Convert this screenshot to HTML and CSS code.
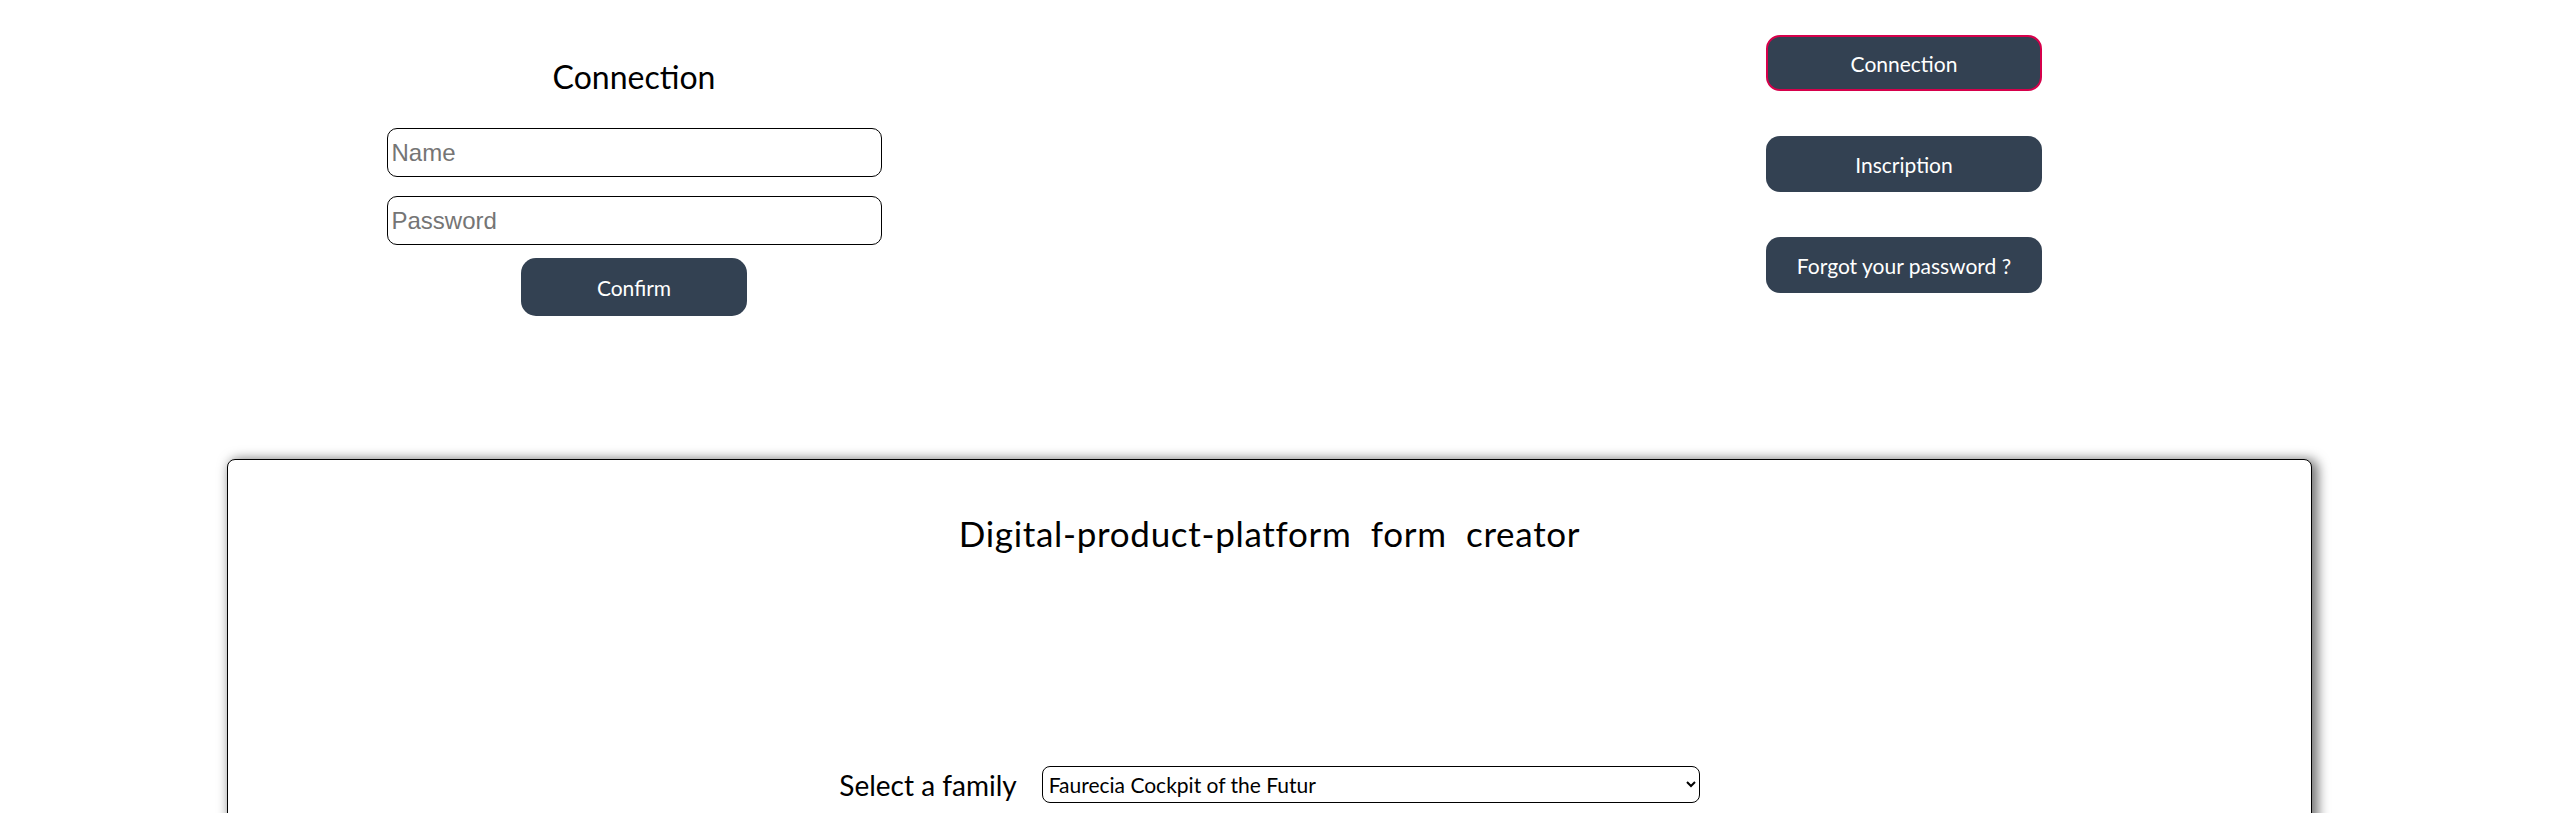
FILE: index.html
```html
<!DOCTYPE html>
<html lang="en">
<head>
<meta charset="utf-8">
<title>Digital-product-platform form creator</title>
<link rel="stylesheet" href="styles.css">
</head>
<body>
<div class="top">
  <section class="login">
    <h2 class="login-title">Connection</h2>
    <input class="field field-name" type="text" placeholder="Name">
    <input class="field field-pass" type="password" placeholder="Password">
    <button class="btn btn-confirm" type="button">Confirm</button>
  </section>
  <nav class="menu">
    <button class="btn btn-menu active" type="button">Connection</button>
    <button class="btn btn-menu" type="button">Inscription</button>
    <button class="btn btn-menu" type="button">Forgot your password ?</button>
  </nav>
</div>
<main class="card">
  <h1 class="card-title">Digital-product-platform&nbsp; form&nbsp; creator</h1>
  <div class="family-row">
    <label class="family-label" for="family">Select a family</label>
    <select class="family-select" id="family">
      <option>Faurecia Cockpit of the Futur</option>
    </select>
  </div>
</main>
</body>
</html>
```

FILE: styles.css
```css
html {
  overflow: hidden;
}

body {
  margin: 0;
  background: #ffffff;
  color: #000000;
  font-family: Lato, "Noto Sans", sans-serif;
}

.top {
  display: grid;
  grid-template-columns: 1268px 1272px;
  height: 459px;
}

.login {
  display: flex;
  flex-direction: column;
  align-items: center;
  padding-top: 57px;
}

.login-title {
  margin: 0;
  font-size: 32px;
  font-weight: 400;
  line-height: 40px;
}

.field {
  box-sizing: border-box;
  width: 495px;
  height: 49px;
  border: 1px solid #000000;
  border-radius: 10px;
  padding: 0 4px;
  font-family: "Liberation Sans", Arial, sans-serif;
  font-size: 24px;
  background: #ffffff;
  outline: none;
}

.field::placeholder {
  color: #757575;
}

.field-name {
  margin-top: 31px;
}

.field-pass {
  margin-top: 19px;
}

.btn {
  box-sizing: border-box;
  display: flex;
  align-items: center;
  justify-content: center;
  background: #334152;
  color: #ffffff;
  font-family: Lato, "Noto Sans", sans-serif;
  font-size: 21px;
  cursor: pointer;
  padding: 0;
}

.btn-confirm {
  margin-top: 13px;
  width: 226px;
  height: 58px;
  border: none;
  border-radius: 15px;
}

.menu {
  display: flex;
  flex-direction: column;
  align-items: center;
  gap: 45px;
  padding-top: 35px;
}

.btn-menu {
  width: 276px;
  height: 56px;
  border: 2px solid transparent;
  border-radius: 14px;
}

.btn-menu.active {
  border-color: #d6004b;
}

.card {
  box-sizing: border-box;
  margin-left: 227px;
  width: 2085px;
  height: 700px;
  padding-top: 52px;
  border: 1px solid #000000;
  border-radius: 8px;
  background: #ffffff;
  box-shadow: 4px 2px 12px 2px rgba(0, 0, 0, 0.55);
}

.card-title {
  margin: 0;
  text-align: center;
  font-size: 35px;
  font-weight: 400;
  line-height: 42px;
  letter-spacing: 0.7px;
}

.family-row {
  display: flex;
  justify-content: center;
  align-items: center;
  gap: 25px;
  margin-top: 212px;
}

.family-label {
  font-size: 28px;
}

.family-select {
  box-sizing: border-box;
  width: 658px;
  height: 37px;
  border: 1px solid #000000;
  border-radius: 8px;
  padding: 0 2px;
  background: #ffffff;
  color: #000000;
  font-family: Lato, "Noto Sans", sans-serif;
  font-size: 21px;
}
```
